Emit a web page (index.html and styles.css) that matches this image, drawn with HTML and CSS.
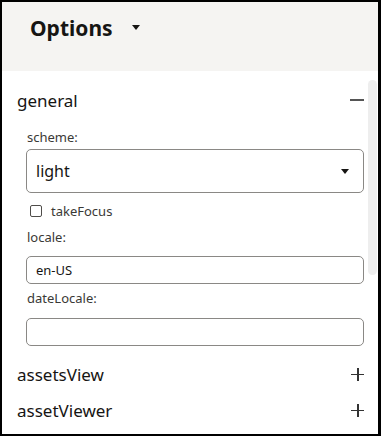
FILE: index.html
```html
<!DOCTYPE html>
<html lang="en">
<head>
    <meta charset="UTF-8">
    <meta name="viewport" content="width=device-width, initial-scale=1.0">
    <title>Options</title>
    <link rel="stylesheet" href="styles.css">
</head>
<body>
    <div class="panel">
        <div class="header">
            <span class="header-title">Options</span>
            <span class="header-caret"></span>
        </div>

        <div class="content">
            <div class="scroll-thumb"></div>

            <div class="section">
                <div class="section-head">
                    <span>general</span>
                    <span class="icon-minus"></span>
                </div>
                <div class="section-body">
                    <div class="field-label">scheme:</div>
                    <div class="select">
                        <span>light</span>
                        <span class="select-caret"></span>
                    </div>
                    <label class="check-row">
                        <span class="check-box"></span>
                        <span>takeFocus</span>
                    </label>
                    <div class="field-label label-locale">locale:</div>
                    <div class="text-input">en-US</div>
                    <div class="field-label label-date">dateLocale:</div>
                    <div class="text-input"></div>
                </div>
            </div>

            <div class="section section-closed first-closed">
                <div class="section-head">
                    <span>assetsView</span>
                    <span class="icon-plus"></span>
                </div>
            </div>

            <div class="section section-closed">
                <div class="section-head">
                    <span>assetViewer</span>
                    <span class="icon-plus"></span>
                </div>
            </div>
        </div>
    </div>
</body>
</html>
```

FILE: styles.css
```css
html, body {
    margin: 0;
    padding: 0;
}

body {
    font-family: 'Noto Sans', 'Open Sans', sans-serif;
    color: #161513;
    background: white;
}

.panel {
    width: 381px;
    height: 436px;
    box-sizing: border-box;
    border: 2px solid #000;
    border-right-width: 3px;
    overflow: hidden;
    display: flex;
    flex-direction: column;
}

.header {
    height: 69px;
    flex-shrink: 0;
    background: #f5f4f2;
    box-sizing: border-box;
    padding: 11px 0 0 28px;
    display: flex;
    align-items: flex-start;
}

.header-title {
    font-size: 21px;
    font-weight: 700;
    line-height: 30px;
    color: #161513;
}

.header-caret {
    width: 0;
    height: 0;
    margin: 12px 0 0 19px;
    border-left: 4px solid transparent;
    border-right: 4px solid transparent;
    border-top: 5px solid #161513;
}

.content {
    position: relative;
    flex: 1;
    padding: 11px 14px 0 15px;
}

.scroll-thumb {
    position: absolute;
    top: 9px;
    right: 1px;
    width: 9px;
    height: 195px;
    border-radius: 5px;
    background: #eeeeee;
}

.section-head {
    height: 36px;
    display: flex;
    align-items: center;
    justify-content: space-between;
    font-size: 17px;
    color: #161513;
}

.icon-minus {
    width: 14px;
    height: 2px;
    background: #555;
}

.icon-plus {
    position: relative;
    width: 13px;
    height: 13px;
}

.icon-plus::before,
.icon-plus::after {
    content: '';
    position: absolute;
    background: #333;
}

.icon-plus::before {
    left: 0;
    top: 6px;
    width: 13px;
    height: 1.5px;
}

.icon-plus::after {
    left: 6px;
    top: 0;
    width: 1.5px;
    height: 13px;
}

.section-body {
    padding-left: 9px;
}

.field-label {
    font-size: 13px;
    line-height: 20px;
    color: #3a3936;
    padding-left: 1px;
    margin-top: 9px;
}

.label-locale {
    margin-top: 6px;
}

.label-date {
    margin-top: 4px;
}

.select {
    margin-top: 2px;
    height: 44px;
    box-sizing: border-box;
    border: 1px solid #8a8885;
    border-radius: 5px;
    padding: 0 14px 0 9px;
    display: flex;
    align-items: center;
    justify-content: space-between;
    font-size: 16px;
    color: #161513;
}

.select-caret {
    width: 0;
    height: 0;
    border-left: 4.5px solid transparent;
    border-right: 4.5px solid transparent;
    border-top: 5px solid #161513;
}

.check-row {
    margin-top: 8px;
    height: 20px;
    display: flex;
    align-items: center;
    font-size: 13px;
    color: #3a3936;
    padding-left: 4px;
}

.check-box {
    width: 12px;
    height: 12px;
    box-sizing: border-box;
    border: 1.5px solid #4f4d4a;
    border-radius: 2px;
    margin-right: 9px;
}

.text-input {
    margin-top: 9px;
    height: 28px;
    box-sizing: border-box;
    border: 1px solid #8a8885;
    border-radius: 5px;
    padding: 0 9px;
    display: flex;
    align-items: center;
    font-size: 13px;
    color: #161513;
}

.label-date + .text-input {
    margin-top: 10px;
}

.first-closed {
    margin-top: 10px;
}
```
